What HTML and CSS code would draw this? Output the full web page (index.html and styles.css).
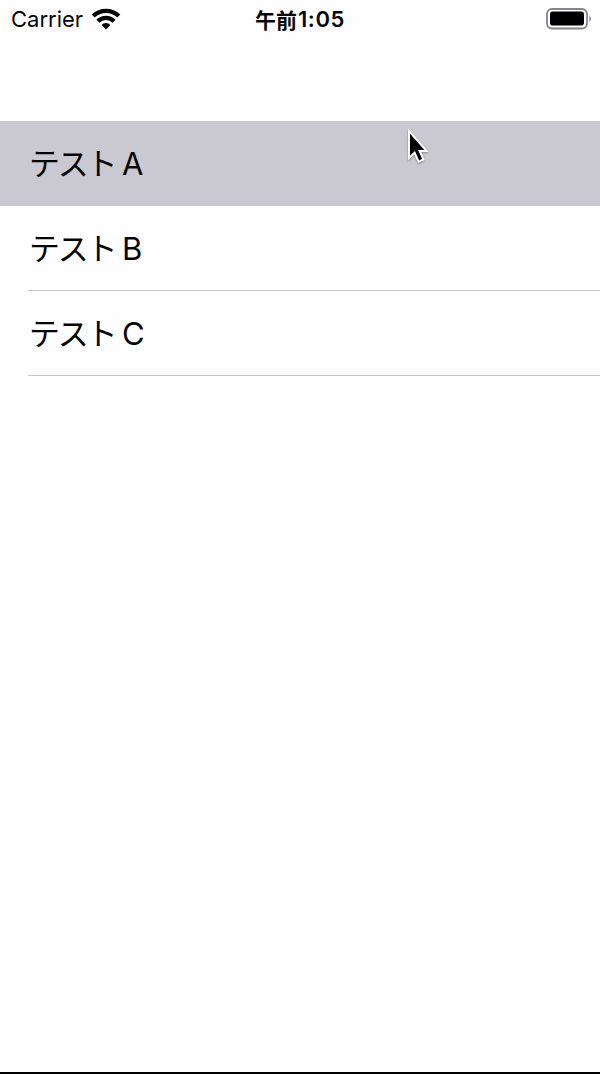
FILE: index.html
```html
<!DOCTYPE html>
<html lang="ja">
<head>
<meta charset="utf-8">
<title>テスト</title>
<link rel="stylesheet" href="styles.css">
</head>
<body>
<div class="screen">
  <header class="status">
    <div class="carrier">
      <span class="carrier-name">Carrier</span>
      <svg class="wifi" width="30" height="22" viewBox="0 0 30 22" fill="none" stroke="#050505" stroke-width="4.3">
        <path d="M2.2 8a18.6 18.6 0 0 1 25.6 0"/>
        <path d="M6.9 13.2a11.6 11.6 0 0 1 16.2 0"/>
        <path d="M15 21.4l-4.4-4.4a5.8 5.8 0 0 1 8.8 0z" fill="#050505" stroke="none"/>
      </svg>
    </div>
    <div class="time"><span class="period">午前</span><span class="clock">1:05</span></div>
    <svg class="battery" width="46" height="22" viewBox="0 0 46 22">
      <rect x="1" y="1" width="40" height="19.5" rx="5" fill="none" stroke="#858488" stroke-width="1.8"/>
      <rect x="4" y="3.6" width="34" height="14" rx="2.8" fill="#000"/>
      <path d="M43.3 7.3q3.2 3.4 0 6.8z" fill="#858488"/>
    </svg>
  </header>
  <main class="list">
    <div class="row selected"><span class="kana">テスト</span><span class="letter">A</span></div>
    <div class="row"><span class="kana">テスト</span><span class="letter">B</span></div>
    <div class="row"><span class="kana">テスト</span><span class="letter">C</span></div>
  </main>
  <svg class="pointer" width="26" height="38" viewBox="0 0 26 38">
    <path d="M3 3v27l5.6-5.4 4 9 4.8-2.1-3.8-8.6H20.5z" fill="#000" stroke="#fff" stroke-width="2"/>
  </svg>
</div>
</body>
</html>
```
FILE: styles.css
```css
body {
  margin: 0;
}

.screen {
  position: relative;
  box-sizing: border-box;
  height: 1074px;
  overflow: hidden;
  border-bottom: 2px solid #000;
  background: #fefdff;
  color: #050505;
  font-family: Inter, "Noto Sans CJK JP", sans-serif;
}

.status {
  display: grid;
  grid-template-columns: 1fr auto 1fr;
  height: 38px;
  margin-bottom: 83px;
  padding: 0 8px;
  box-sizing: border-box;
  align-items: center;
}

.carrier {
  display: flex;
  align-items: center;
  gap: 8px;
  padding-left: 3px;
}

.carrier-name {
  font-size: 22px;
  line-height: 26px;
}

.time {
  display: flex;
  align-items: center;
  font-size: 21px;
  font-weight: 600;
}

.period {
  padding-bottom: 1px;
  font-family: "Noto Sans CJK JP", sans-serif;
  font-weight: 700;
}

.clock {
  padding-left: 1px;
  font-size: 22px;
  letter-spacing: 0.6px;
}

.battery {
  justify-self: end;
}

.row {
  display: flex;
  height: 85px;
  margin-left: 28px;
  padding-left: 1px;
  box-sizing: border-box;
  align-items: center;
  gap: 7px;
  border-bottom: 1px solid #c5c4c8;
  font-size: 31px;
}

.row.selected {
  margin-left: 0;
  padding-left: 29px;
  background: #cac9d1;
  border-color: #cac9d1;
}

.kana {
  padding-bottom: 3px;
  font-family: "Noto Sans CJK JP", sans-serif;
  font-size: 31px;
  letter-spacing: -2.3px;
}

.pointer {
  position: absolute;
  left: 406px;
  top: 128px;
  filter: drop-shadow(0 1px 1px rgba(0, 0, 0, 0.35));
}
```
